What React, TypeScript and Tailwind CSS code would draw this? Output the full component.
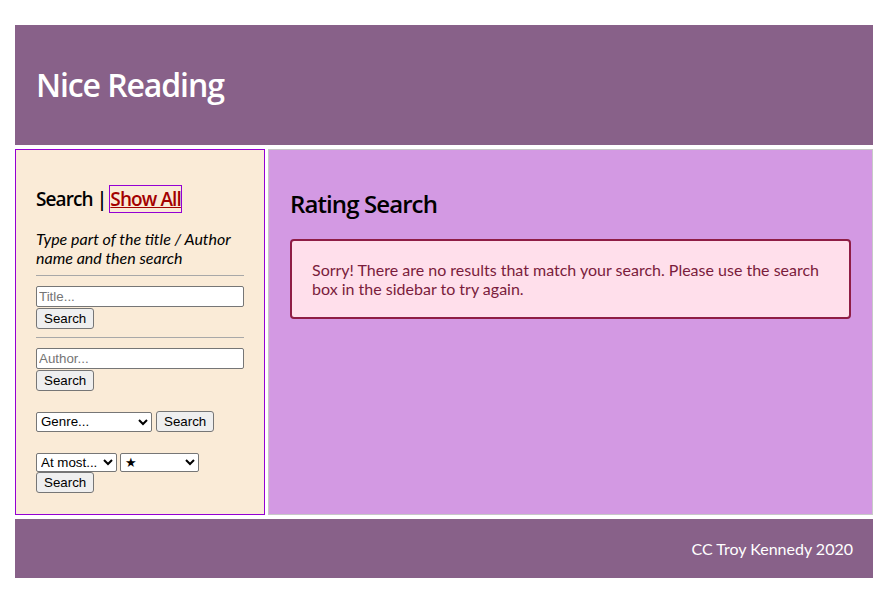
import React from "react";

const formFont = "font-['Liberation_Sans',Arial,sans-serif] text-[13.33px]";

function SearchButton({ block = true }: { block?: boolean }) {
  return (
    <button
      type="button"
      className={`${formFont} ${block ? "block" : ""} h-[21px] px-[7px] border border-[#767676] rounded-[3px] bg-[#efefef] text-black leading-none`}
    >
      Search
    </button>
  );
}

function Sidebar() {
  return (
    <aside className="w-[250px] border border-[#9400d3] bg-[#faebd7] px-[20px] pt-[37px] font-['Lato',sans-serif]">
      {/* Heading + show all */}
      <h2 className="text-[19px] leading-[24px] font-semibold text-black font-['Open_Sans',sans-serif] tracking-[-0.9px]">
        Search |{" "}
        <a href="#" className="text-[#a30000] underline outline outline-1 outline-[#9400d3]">
          Show All
        </a>
      </h2>
      <p className="mt-[18px] text-[16px] leading-[19px] italic font-normal text-black">
        Type part of the title / Author name and then search
      </p>
      <hr className="mt-[8px] border-t border-[#a8a8a8]" />

      {/* Title search */}
      <input
        placeholder="Title..."
        className={`${formFont} mt-[10px] block w-[208px] h-[21px] px-[2px] border border-[#767676] rounded-[2px] bg-white placeholder:text-[#757575]`}
      />
      <div className="mt-[1px]">
        <SearchButton />
      </div>
      <hr className="mt-[8px] border-t border-[#a8a8a8]" />

      {/* Author search */}
      <input
        placeholder="Author..."
        className={`${formFont} mt-[10px] block w-[208px] h-[21px] px-[2px] border border-[#767676] rounded-[2px] bg-white placeholder:text-[#757575]`}
      />
      <div className="mt-[1px]">
        <SearchButton />
      </div>

      {/* Genre */}
      <div className="mt-[20px] flex items-center gap-[4px]">
        <select className={`${formFont} w-[116px] h-[20px] border border-[#767676] rounded-[2px] bg-white text-black`}>
          <option>Genre...</option>
        </select>
        <SearchButton block={false} />
      </div>

      {/* Rating */}
      <div className="mt-[21px] flex items-center gap-[3px]">
        <select className={`${formFont} w-[81px] h-[19px] border border-[#767676] rounded-[2px] bg-white text-black`}>
          <option>At most...</option>
        </select>
        <select className={`${formFont} w-[79px] h-[19px] border border-[#767676] rounded-[2px] bg-white text-black`}>
          <option>★</option>
        </select>
      </div>
      <SearchButton />
    </aside>
  );
}

export default function App() {
  return (
    <div className="ml-[15px] mt-[25px] w-[858px] bg-white">
      <header className="h-[120px] bg-[#886189] flex items-center px-[21px]">
        <h1 className="text-[32px] font-semibold text-white font-['Open_Sans',sans-serif] tracking-[-1.1px]">
          Nice Reading
        </h1>
      </header>

      <div className="mt-[4px] flex gap-[3px] h-[366px]">
        <Sidebar />
        <main className="flex-1 border border-[#c8c8c8] bg-[#d399e3] px-[21px] pt-[40px]">
          <h2 className="text-[24px] leading-[28px] font-semibold text-black font-['Open_Sans',sans-serif] tracking-[-0.9px]">
            Rating Search
          </h2>
          <div className="mt-[21px] border-2 border-[#8f1d45] rounded-[4px] bg-[#ffdfeb] px-[20px] py-[19px]">
            <p className="text-[16px] leading-[19px] text-[#7a1c3c] font-['Lato',sans-serif]">
              Sorry! There are no results that match your search. Please use the search box in the sidebar to try
              again.
            </p>
          </div>
        </main>
      </div>

      <footer className="mt-[4px] h-[59px] bg-[#886189] flex items-center justify-end px-[20px]">
        <span className="text-[16px] text-white font-['Lato',sans-serif]">CC Troy Kennedy 2020</span>
      </footer>
    </div>
  );
}
